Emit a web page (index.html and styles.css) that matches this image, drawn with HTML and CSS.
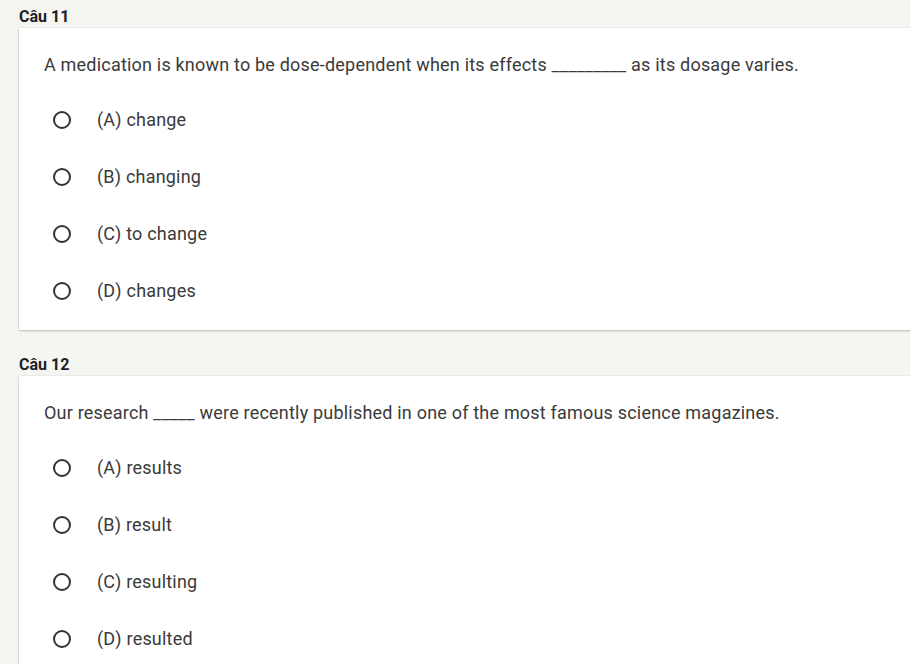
FILE: index.html
```html
<!DOCTYPE html>
<html>
<head>
<meta charset="utf-8">
<link rel="stylesheet" href="styles.css">
</head>
<body>
<div class="page">
  <section class="question">
    <div class="label">Câu 11</div>
    <div class="card">
      <div class="prompt">A medication is known to be dose-dependent when its effects _________ as its dosage varies.</div>
      <ul class="options">
        <li class="option"><span class="radio"></span><span class="opt-text">(A) change</span></li>
        <li class="option"><span class="radio"></span><span class="opt-text">(B) changing</span></li>
        <li class="option"><span class="radio"></span><span class="opt-text">(C) to change</span></li>
        <li class="option"><span class="radio"></span><span class="opt-text">(D) changes</span></li>
      </ul>
    </div>
  </section>
  <section class="question">
    <div class="label">Câu 12</div>
    <div class="card">
      <div class="prompt">Our research _____ were recently published in one of the most famous science magazines.</div>
      <ul class="options">
        <li class="option"><span class="radio"></span><span class="opt-text">(A) results</span></li>
        <li class="option"><span class="radio"></span><span class="opt-text">(B) result</span></li>
        <li class="option"><span class="radio"></span><span class="opt-text">(C) resulting</span></li>
        <li class="option"><span class="radio"></span><span class="opt-text">(D) resulted</span></li>
      </ul>
    </div>
  </section>
</div>
</body>
</html>
```
FILE: styles.css
```css
html, body {
  margin: 0;
  padding: 0;
  background: #f5f5f2;
  font-family: Roboto, "Liberation Sans", sans-serif;
  overflow: hidden;
}
.page {
  padding-left: 19px;
  width: 910px;
  box-sizing: border-box;
}
.question {
  margin-bottom: 18px;
}
.label {
  padding-top: 7px;
  margin-bottom: 1px;
  line-height: 20px;
  font-size: 16px;
  font-weight: 700;
  color: #202124;
}
.card {
  background: #fff;
  margin-right: -20px;
  padding: 25px 0 11px 25px;
  box-shadow: 0 1px 2px rgba(0,0,0,0.22), 0 0 1px rgba(0,0,0,0.2);
}
.prompt {
  font-size: 18px;
  line-height: 24px;
  letter-spacing: 0.2px;
  color: #3a3a3a;
}
.options {
  list-style: none;
  margin: 14px 0 0 0;
  padding: 0;
}
.option {
  height: 57px;
  display: flex;
  align-items: center;
}
.radio {
  width: 14px;
  height: 14px;
  border: 2px solid #333;
  border-radius: 50%;
  margin-left: 9px;
  flex: none;
}
.opt-text {
  margin-left: 26px;
  font-size: 18px;
  letter-spacing: 0.2px;
  color: #3a3a3a;
}
```
